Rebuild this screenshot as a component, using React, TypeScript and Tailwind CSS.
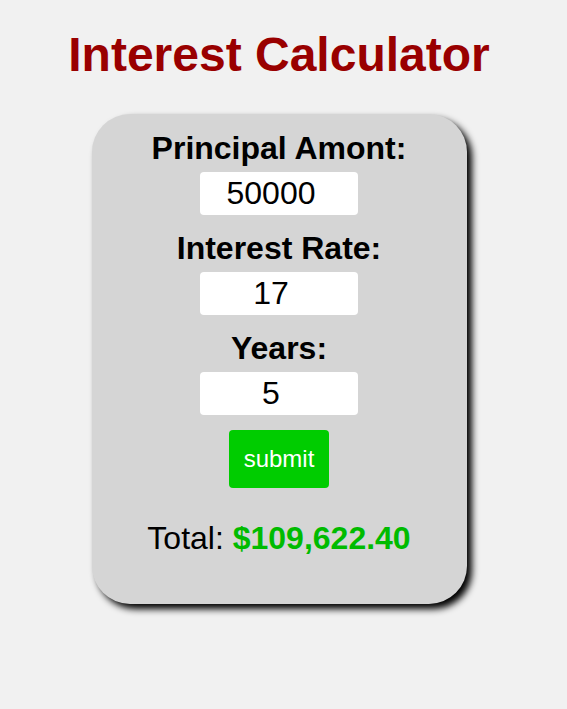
import { useState } from "react";

const font = { fontFamily: '"Liberation Sans", Arial, sans-serif' };

const Field = ({
  label,
  value,
  onChange,
}: {
  label: string;
  value: string;
  onChange: (v: string) => void;
}) => (
  <div className="flex flex-col items-center">
    <label className="text-[32px] leading-none font-bold text-black">{label}</label>
    <input
      value={value}
      onChange={(e) => onChange(e.target.value)}
      className="mt-[8px] w-[158px] h-[43px] rounded-[4px] bg-white pr-[16px] text-center text-[32px] leading-none text-black outline-none"
      style={font}
    />
  </div>
);

export default function App() {
  const [principal, setPrincipal] = useState("50000");
  const [rate, setRate] = useState("17");
  const [years, setYears] = useState("5");

  const total = (Number(principal) * Math.pow(1 + Number(rate) / 100, Number(years))) || 0;
  const formatted = total.toLocaleString("en-US", {
    style: "currency",
    currency: "USD",
  });

  return (
    <div className="min-h-[709px] w-full bg-[#f1f1f1] pr-[9px]" style={font}>
      <div className="flex flex-col items-center">
        <h1 className="mt-[31px] text-[48px] leading-none font-bold text-[#990000]">
          Interest Calculator
        </h1>
        <div className="mt-[35px] flex w-[375px] flex-col items-center gap-[17px] rounded-[38px] bg-[#d5d5d5] pt-[18px] pb-[50px] shadow-[5px_5px_7px_#000]">
          <Field label="Principal Amont:" value={principal} onChange={setPrincipal} />
          <Field label="Interest Rate:" value={rate} onChange={setRate} />
          <Field label="Years:" value={years} onChange={setYears} />
          <button className="-mt-[2px] h-[58px] w-[100px] rounded-[4px] bg-[#00cc00] text-[24px] text-white">
            submit
          </button>
          <p className="mt-[17px] text-[32px] leading-none text-black">
            Total: <span className="font-bold text-[#00bb00]">{formatted}</span>
          </p>
        </div>
      </div>
    </div>
  );
}
